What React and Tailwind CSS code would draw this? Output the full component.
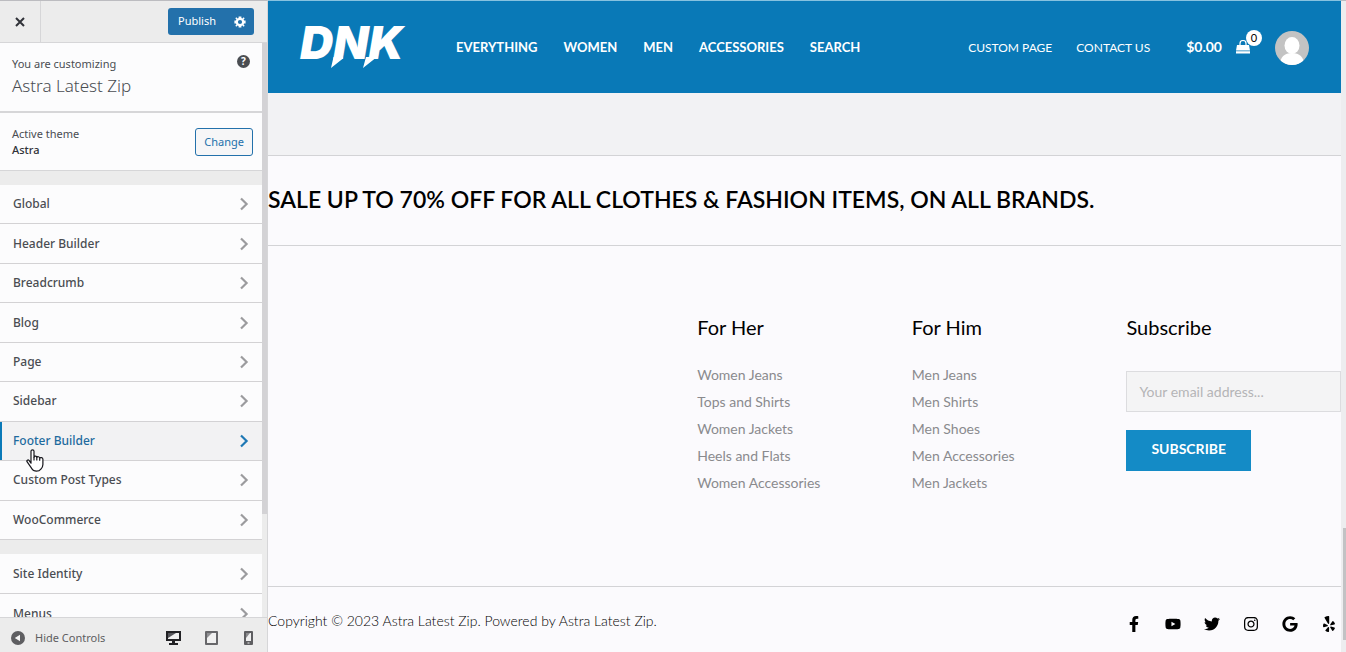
import React from 'react';
import { FaFacebookF, FaYoutube, FaTwitter, FaInstagram, FaGoogle, FaYelp } from 'react-icons/fa';
import { clsx } from 'clsx';

const panelLinks = [
  'Global', 'Header Builder', 'Breadcrumb', 'Blog', 'Page',
  'Sidebar', 'Footer Builder', 'Custom Post Types', 'WooCommerce',
];

const siteLinks = ['Site Identity', 'Menus'];

const mainMenu = ['EVERYTHING', 'WOMEN', 'MEN', 'ACCESSORIES', 'SEARCH'];

const footerMenus = [
  { title: 'For Her', links: ['Women Jeans', 'Tops and Shirts', 'Women Jackets', 'Heels and Flats', 'Women Accessories'] },
  { title: 'For Him', links: ['Men Jeans', 'Men Shirts', 'Men Shoes', 'Men Accessories', 'Men Jackets'] },
];

const socialLinks = [
  { icon: FaFacebookF, label: 'Facebook' },
  { icon: FaYoutube, label: 'YouTube' },
  { icon: FaTwitter, label: 'Twitter' },
  { icon: FaInstagram, label: 'Instagram' },
  { icon: FaGoogle, label: 'Google' },
  { icon: FaYelp, label: 'Yelp' },
];

function PanelRow({ label, active }) {
  return (
    <li className={clsx('relative border-b border-[#d3d2d4]', active ? 'bg-[#f2f2f3]' : 'bg-[#fcfcfd]')}>
      <button
        className={clsx(
          'flex h-full w-full items-center justify-between pr-[11px] text-left text-xs font-medium',
          active ? 'border-l-2 border-[#0a7ab8] pl-[11px] text-[#1e6b9e]' : 'pl-[13px] text-[#4a4d52]'
        )}
      >
        {label}
        <svg viewBox="0 0 14 14" className={clsx('h-3.5 w-3.5', active ? 'text-[#1e78b4]' : 'text-[#9b9b9e]')} fill="none" stroke="currentColor" strokeWidth="2.2">
          <path d="M4 1.5 9.6 7 4 12.5" />
        </svg>
      </button>
      {active && <HandCursor />}
    </li>
  );
}

function HandCursor() {
  return (
    <svg viewBox="0 0 18 23" className="pointer-events-none absolute left-[26px] top-[27px] z-10 h-[23px] w-[18px]" fill="#fff" stroke="#16161c" strokeWidth="1.2" strokeLinejoin="round">
      <path d="M5 14.2V2.2C5 .3 8 .3 8 2.2v5.9c.2-1.4 2.8-1.2 2.8.4.4-1.3 2.9-1 2.9.7.5-1.1 3.2-.8 3.2 1v5.3c0 2-.9 3.3-1.8 4.3-1.4 1.8-2.6 2.4-4.6 2.4-2.6 0-4-1.2-5-3L1 12.7c-.6-1.4 1-2.3 2-1.3z" />
      <path d="M8 8v3.6M10.8 8.6v3M13.7 9.3v2.5" fill="none" />
    </svg>
  );
}

function GearIcon() {
  return (
    <svg viewBox="0 0 20 20" className="h-3.5 w-3.5" fill="currentColor">
      <path fillRule="evenodd" d="M18 12h-2.200c-.1.600-.4 1.100-.7 1.600l1.600 1.600-1.500 1.500-1.600-1.600c-.5.300-1 .5-1.600.7V18H8v-2.200c-.6-.2-1.100-.4-1.600-.7l-1.600 1.600-1.500-1.500 1.600-1.600c-.3-.5-.6-1-.7-1.600H2V8h2.200c.1-.6.400-1.100.7-1.600L3.300 4.800l1.500-1.500 1.600 1.600c.5-.3 1-.5 1.600-.7V2h4v2.200c.6.200 1.100.4 1.600.7l1.600-1.600 1.500 1.500-1.600 1.600c.3.500.6 1 .7 1.600H18zm-8 1a3 3 0 1 0 0-6 3 3 0 0 0 0 6z" />
    </svg>
  );
}

function Sidebar() {
  return (
    <aside className="flex w-[268px] shrink-0 flex-col border-r border-[#d6d6d8] border-t border-t-[#bcbcc0] bg-[#ececec] font-['Noto_Sans',sans-serif] text-[#4a4d52]">
      <div className="flex h-[42px] shrink-0 items-center justify-between border-b border-[#d6d6d8] pr-[13px]">
        <button aria-label="Close" className="flex h-full w-[41px] items-center justify-center border-r border-[#d6d6d8]">
          <svg viewBox="0 0 10 10" className="h-2.5 w-2.5" fill="none" stroke="#303238" strokeWidth="2">
            <path d="m1 1 8 8M9 1 1 9" />
          </svg>
        </button>
        <div className="flex h-[27px] items-center rounded-[3px] bg-[#2371ab] text-white">
          <button className="px-2.5 text-[11px]">Publish</button>
          <button aria-label="Publish settings" className="px-[7px]">
            <GearIcon />
          </button>
        </div>
      </div>

      <div className="flex min-h-0 flex-1 overflow-hidden">
        <div className="min-w-0 flex-1">
          <div className="flex justify-between border-b-2 border-[#d6d6d8] bg-[#fcfcfd] p-3">
            <div>
              <p className="text-[11px] leading-[18px]">You are customizing</p>
              <h1 className="text-[17px] font-light leading-[26px]">Astra Latest Zip</h1>
            </div>
            <button aria-label="Help" className="flex h-[13px] w-[13px] items-center justify-center rounded-full bg-[#4a4d52] text-[10px] font-bold text-white">?</button>
          </div>
          <div className="flex items-center justify-between border-b border-[#d6d6d8] bg-[#fcfcfd] pb-3 pl-3 pr-[9px] pt-[13px]">
            <div className="text-[11px] leading-4">
              <p>Active theme</p>
              <p className="font-medium text-[#303238]">Astra</p>
            </div>
            <button className="h-7 rounded-[3px] border border-[#2371ab] bg-[#f6f6f7] px-2 text-[11px] text-[#2371ab]">Change</button>
          </div>
          <ul className="mt-3.5 grid h-[355px] auto-rows-fr">
            {panelLinks.map(label => (
              <PanelRow key={label} label={label} active={label === 'Footer Builder'} />
            ))}
          </ul>
          <ul className="mt-3.5 grid auto-rows-[40px]">
            {siteLinks.map(label => (
              <PanelRow key={label} label={label} />
            ))}
          </ul>
        </div>
        <div className="w-[5px] shrink-0">
          <div className="h-[82%] bg-[#d3d2d5]" />
        </div>
      </div>

      {/* Footer */}
      <div className="flex h-[35px] shrink-0 items-center justify-between border-t border-[#d6d6d8] pb-1 pl-[11px] pr-3.5 pt-2.5 text-[#5e5e61]">
        <button className="flex items-center gap-2.5 text-[11px]">
          <svg viewBox="0 0 14 14" className="h-3.5 w-3.5">
            <circle cx="7" cy="7" r="7" fill="#5e5e61" />
            <path d="M9 3.8v6.4L3.8 7z" fill="#f5f5f5" />
          </svg>
          Hide Controls
        </button>
        <div className="flex items-center gap-6">
          <button aria-label="Desktop preview">
            <svg viewBox="0 0 15 14" className="h-3.5 w-[15px]">
              <path d="M0 0h15v10H9v2h3v2H3v-2h3v-2H0z" fill="#222225" />
              <path d="M2 2h11v6H2z" fill="#f0f0f0" />
              <path d="M2 2h8L2 7z" fill="#55555a" />
            </svg>
          </button>
          <button aria-label="Tablet preview">
            <svg viewBox="0 0 13 14" className="h-3.5 w-[13px]">
              <path d="M1 0h11a1 1 0 0 1 1 1v12a1 1 0 0 1-1 1H1a1 1 0 0 1-1-1V1a1 1 0 0 1 1-1z" fill="#67676a" />
              <path d="M2 2h9v10H2z" fill="#f0f0f0" />
              <path d="M2 2h5L2 7z" fill="#8f8f92" />
            </svg>
          </button>
          <button aria-label="Mobile preview" className="pl-0.5">
            <svg viewBox="0 0 9 14" className="h-3.5 w-[9px]">
              <path d="M1 0h7a1 1 0 0 1 1 1v12a1 1 0 0 1-1 1H1a1 1 0 0 1-1-1V1a1 1 0 0 1 1-1z" fill="#5e5e61" />
              <path d="M2 2h5v8H2zM3.5 11.5h2v1h-2z" fill="#f0f0f0" />
              <path d="M2 2h4L2 7z" fill="#8a8a8d" />
            </svg>
          </button>
        </div>
      </div>
    </aside>
  );
}

function Logo() {
  return (
    <a href="#home" aria-label="DNK">
      <svg viewBox="0 0 106 44" className="h-11 w-[106px] overflow-visible" fill="#fff">
        <text x="0" y="33" fontFamily="Inter, sans-serif" fontWeight="900" fontStyle="italic" fontSize="46">DNK</text>
        <path d="M33.5 31 31 42l12-9.500V31zM66 31l-3 11 12-9.500V31z" />
      </svg>
    </a>
  );
}

function SiteHeader() {
  return (
    <header className="flex h-[93px] items-center border-t border-[#86c2e0] bg-[#0979b7] px-8 pt-0.5 text-white">
      <Logo />
      <nav className="ml-[50px] flex gap-[26px] text-[13px] font-bold">
        {mainMenu.map(item => (
          <a key={item} href="#menu">{item}</a>
        ))}
      </nav>
      <nav className="ml-auto flex gap-6 text-xs">
        <a href="#custom">CUSTOM PAGE</a>
        <a href="#contact">CONTACT US</a>
      </nav>
      <a href="#cart" className="ml-9 flex items-center gap-3.5 pb-0.5 text-sm font-bold">
        $0.00
        <span className="relative">
          <svg viewBox="0 0 14 14" className="h-3.5 w-3.5">
            <path d="M4 6V3.500a3 3 0 0 1 6 0V6" fill="none" stroke="#fff" strokeWidth="1.200" />
            <path d="M1 5h12l1 5.500H0zM0 11.300h14V13.500H0z" fill="#fff" />
          </svg>
          <span className="absolute -top-2.5 left-2.5 flex h-4 w-4 items-center justify-center rounded-full bg-white text-[11px] font-normal text-black">0</span>
        </span>
      </a>
      <a href="#account" aria-label="Account" className="ml-[25px]">
        <svg viewBox="0 0 34 34" className="h-[34px] w-[34px] overflow-hidden rounded-full bg-[#c3c3c3]" fill="#fff">
          <ellipse cx="17" cy="14.5" rx="7.5" ry="8.5" />
          <path d="M5 34c0-8 4.500-12 12-12s12 4 12 12z" />
        </svg>
      </a>
    </header>
  );
}

function SiteFooter() {
  return (
    <footer className="flex flex-1 flex-col border-t border-[#d3d3d6]">
      <h2 className="border-b border-[#d3d3d6] pb-[29px] pt-[27px] text-[23px] font-semibold leading-[33px] text-black">
        SALE UP TO 70% OFF FOR ALL CLOTHES &amp; FASHION ITEMS, ON ALL BRANDS.
      </h2>
      <div className="grid flex-1 grid-cols-5 border-b border-[#d3d3d6] pt-[67px]">
        {footerMenus.map((menu, i) => (
          <section key={menu.title} className={clsx(i === 0 && 'col-start-3')}>
            <h3 className="text-xl leading-7 text-black">{menu.title}</h3>
            <ul className="mt-5 text-sm leading-[27px] text-[#8a8a8e]">
              {menu.links.map(link => (
                <li key={link}><a href="#shop">{link}</a></li>
              ))}
            </ul>
          </section>
        ))}
        <section>
          <h3 className="text-xl leading-7 text-black">Subscribe</h3>
          <form className="mt-[30px]">
            <input
              type="email"
              aria-label="Your email address"
              placeholder="Your email address..."
              className="h-[41px] w-full border border-[#dcdcdf] bg-[#f4f4f5] px-3 text-sm placeholder:text-[#b4b4b7]"
            />
            <button type="button" className="mt-[18px] h-[41px] bg-[#148bc6] px-[25px] pb-[3px] text-sm font-bold text-white">SUBSCRIBE</button>
          </form>
        </section>
      </div>
      <div className="flex h-[65px] items-center justify-between pr-1 text-black">
        <p className="pt-0.5 text-sm font-light text-black">Copyright © 2023 Astra Latest Zip. Powered by Astra Latest Zip.</p>
        <ul className="flex gap-[23px] pt-2">
          {socialLinks.map(social => (
            <li key={social.label}>
              <a href="#social" aria-label={social.label}><social.icon className="h-4 w-4" /></a>
            </li>
          ))}
        </ul>
      </div>
    </footer>
  );
}

export default function App() {
  return (
    <div className="flex h-screen overflow-hidden bg-[#fbfafd]">
      <Sidebar />
      <main className="flex min-w-0 flex-1 flex-col font-['Lato',sans-serif]">
        <SiteHeader />
        <div className="h-[62px] bg-[#f2f2f4]" />
        <SiteFooter />
      </main>
      <div className="flex w-[5px] shrink-0 flex-col justify-end border-t border-[#bcbcc0] bg-[#ededef] pb-3 pl-0.5">
        <div className="h-28 bg-[#c2c2c4]" />
      </div>
    </div>
  );
}
